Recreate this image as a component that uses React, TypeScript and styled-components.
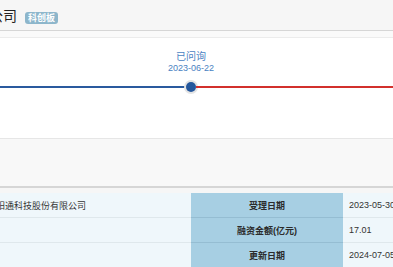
import { FC, Fragment } from "react";
import styled, { createGlobalStyle } from "styled-components";

const GlobalStyle = createGlobalStyle`
  html, body {
    margin: 0;
    padding: 0;
    background: #ffffff;
    overflow: hidden;
  }
  body {
    width: 393px;
    height: 267px;
    font-family: "Liberation Sans", "Noto Sans CJK SC", sans-serif;
  }
`;

const Page = styled.div`
  width: 393px;
  height: 267px;
  overflow: hidden;
`;

const Header = styled.div`
  height: 30px;
  background: #f6f6f6;
  border-bottom: 1px solid #d6d6d6;
  display: flex;
  align-items: center;
  gap: 8px;
`;

const Title = styled.h1`
  margin: 0 0 0 -67px;
  font-size: 14px;
  font-weight: normal;
  color: #222;
  line-height: 30px;
  white-space: nowrap;
  font-family: "Noto Sans CJK SC", sans-serif;
`;

const Badge = styled.span`
  display: inline-flex;
  align-items: center;
  height: 12px;
  padding: 0 3px;
  border-radius: 3px;
  background: #8db6cb;
  color: #fff;
  font-size: 9px;
  line-height: 12px;
  font-weight: bold;
  margin-top: 5px;
  font-family: "Noto Sans CJK SC", sans-serif;
`;

const Strip = styled.div`
  height: 6px;
  background: #fafafa;
  border-bottom: 1px solid #ececec;
`;

const Timeline = styled.div`
  height: 100px;
  background: #fff;
  padding-top: 13px;
  box-sizing: border-box;
`;

const StepLabel = styled.div`
  width: 80px;
  margin-left: 151px;
  text-align: center;
  color: #4a7fc2;
  font-size: 10px;
  line-height: 11px;
`;

const StepDate = styled(StepLabel)`
  font-size: 9px;
  line-height: 12px;
  font-family: "Liberation Sans", sans-serif;
`;

const Track = styled.div`
  margin-top: 6px;
  display: flex;
  align-items: center;
  height: 14px;
`;

const Segment = styled.div<{ $color: string; $width?: number }>`
  height: 2px;
  background: ${(p) => p.$color};
  ${(p) => (p.$width ? `flex: 0 0 ${p.$width}px;` : "flex: 1;")}
`;

const Dot = styled.div`
  flex: 0 0 auto;
  width: 10px;
  height: 10px;
  border-radius: 50%;
  background: #24579c;
  box-shadow: 0 0 0 2px #e4e4e4;
`;

const GrayPanel = styled.div`
  height: 47px;
  background: #f8f8f8;
  border-top: 1px solid #e6e6e6;
  border-bottom: 2px solid #d6d6d6;
`;

const Gap = styled.div`
  height: 5px;
  background: #f6f6f6;
`;

const Table = styled.div`
  display: grid;
  grid-template-columns: 191px 152px 1fr;
`;

const Cell = styled.div<{ $kind: "value" | "label"; $last?: boolean }>`
  height: 25px;
  box-sizing: border-box;
  display: flex;
  align-items: center;
  font-size: 9px;
  white-space: nowrap;
  overflow: hidden;
  background: ${(p) => (p.$kind === "label" ? "#a7cfe3" : "#eff7fb")};
  border-bottom: 1px solid
    ${(p) => (p.$last ? "transparent" : p.$kind === "label" ? "#95bdd2" : "#dfe8ec")};
  color: #333;
  ${(p) =>
    p.$kind === "label"
      ? `justify-content: center; font-weight: bold; color: #2b2b2b;`
      : `padding-left: 6px;`}
`;

const Company = styled.span`
  margin-left: -10px;
`;

const rows = [
  { left: "阳通科技股份有限公司", label: "受理日期", value: "2023-05-30" },
  { left: "", label: "融资金额(亿元)", value: "17.01" },
  { left: "", label: "更新日期", value: "2024-07-05" },
];

const App: FC = () => {
  return (
    <Page>
      <GlobalStyle />
      <Header>
        <Title>股份有限公司</Title>
        <Badge>科创板</Badge>
      </Header>
      <Strip />
      <Timeline>
        <StepLabel>已问询</StepLabel>
        <StepDate>2023-06-22</StepDate>
        <Track>
          <Segment $color="#2a5a9e" $width={186} />
          <Dot />
          <Segment $color="#d2302c" />
        </Track>
      </Timeline>
      <GrayPanel />
      <Gap />
      <Table>
        {rows.map((r, i) => {
          const last = i === rows.length - 1;
          return (
            <Fragment key={i}>
              <Cell $kind="value" $last={last}>
                <Company>{r.left}</Company>
              </Cell>
              <Cell $kind="label" $last={last}>
                {r.label}
              </Cell>
              <Cell $kind="value" $last={last}>
                {r.value}
              </Cell>
            </Fragment>
          );
        })}
      </Table>
    </Page>
  );
};

export default App;
